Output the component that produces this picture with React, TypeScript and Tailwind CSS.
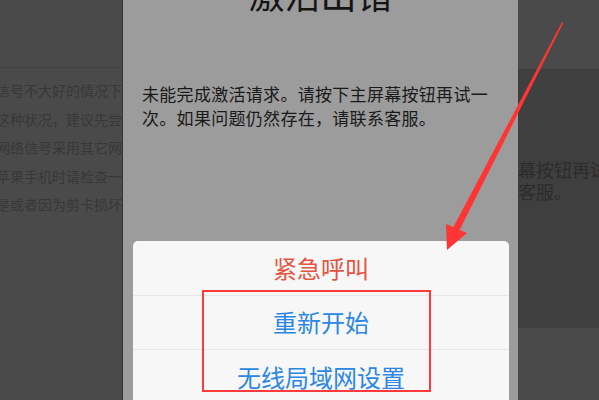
import React from "react";

const leftLines = [
  "信号不大好的情况下",
  "这种状况，建议先尝",
  "网络信号采用其它网",
  "苹果手机时请检查一",
  "是或者因为剪卡损坏",
];

const actions = [
  { label: "紧急呼叫", color: "text-[#e4553f]" },
  { label: "重新开始", color: "text-[#2b87e3]" },
  { label: "无线局域网设置", color: "text-[#2b87e3]" },
];

const App: React.FC = () => {
  return (
    <div
      className="relative flex h-[400px] w-[599px] overflow-hidden bg-[#4a4a4a]"
      style={{ fontFamily: '"Noto Sans CJK SC", "Noto Sans", sans-serif' }}
    >
      {/* LEFT - dimmed article */}
      <div className="w-[123px] shrink-0 overflow-hidden border-r border-[#333333]">
        <div className="h-[68px] border-b border-[#434343]" />
        <div className="-ml-[4px] pt-[8px] text-[14px] leading-[28.5px] whitespace-nowrap text-[#383838]">
          {leftLines.map((line) => (
            <div key={line}>{line}</div>
          ))}
        </div>
      </div>

      {/* CENTER - alert */}
      <div className="flex w-[395px] shrink-0 flex-col overflow-hidden bg-[#9c9c9c]">
        <div className="-mt-[29px] h-[60px] shrink-0 text-center text-[36px] leading-[44px] text-[#151515]">
          激活出错
        </div>
        <p className="mt-[51px] shrink-0 pl-[19px] text-[17px] leading-[24px] tracking-[0.3px] whitespace-nowrap text-[#1a1a1a]">
          未能完成激活请求。请按下主屏幕按钮再试一
          <br />
          次。如果问题仍然存在，请联系客服。
        </p>

        {/* ACTION SHEET */}
        <div className="mt-[111px] ml-[10px] w-[376px] shrink-0 rounded-t-[5px] bg-[#f7f7f7]">
          {actions.map((a, i) => (
            <div
              key={a.label}
              className={`flex h-[54.5px] items-center justify-center text-[24px] ${a.color} ${
                i < actions.length - 1 ? "border-b border-[#e6e6e6]" : ""
              }`}
            >
              {a.label}
            </div>
          ))}
        </div>
      </div>

      {/* RIGHT - dimmed article */}
      <div className="flex-1 overflow-hidden">
        <div className="h-[69px]" />
        <div className="h-[259px] bg-[#3f3f3f] pt-[89px] text-[18px] leading-[22px] whitespace-nowrap text-[#2c2c2c]">
          <div>幕按钮再试</div>
          <div>客服。</div>
        </div>
      </div>

      {/* ANNOTATIONS */}
      <div className="pointer-events-none absolute left-[202px] top-[290px] h-[102px] w-[229px] border-[2px] border-[#ff3a3a]" />
      <svg
        className="pointer-events-none absolute left-0 top-0"
        width="599"
        height="400"
        viewBox="0 0 599 400"
      >
        <polygon
          points="562,22 563,23.6 459.6,230.1 467,233 447,250 446,224 453.4,226.9"
          fill="#ff3535"
        />
      </svg>
    </div>
  );
};

export default App;
